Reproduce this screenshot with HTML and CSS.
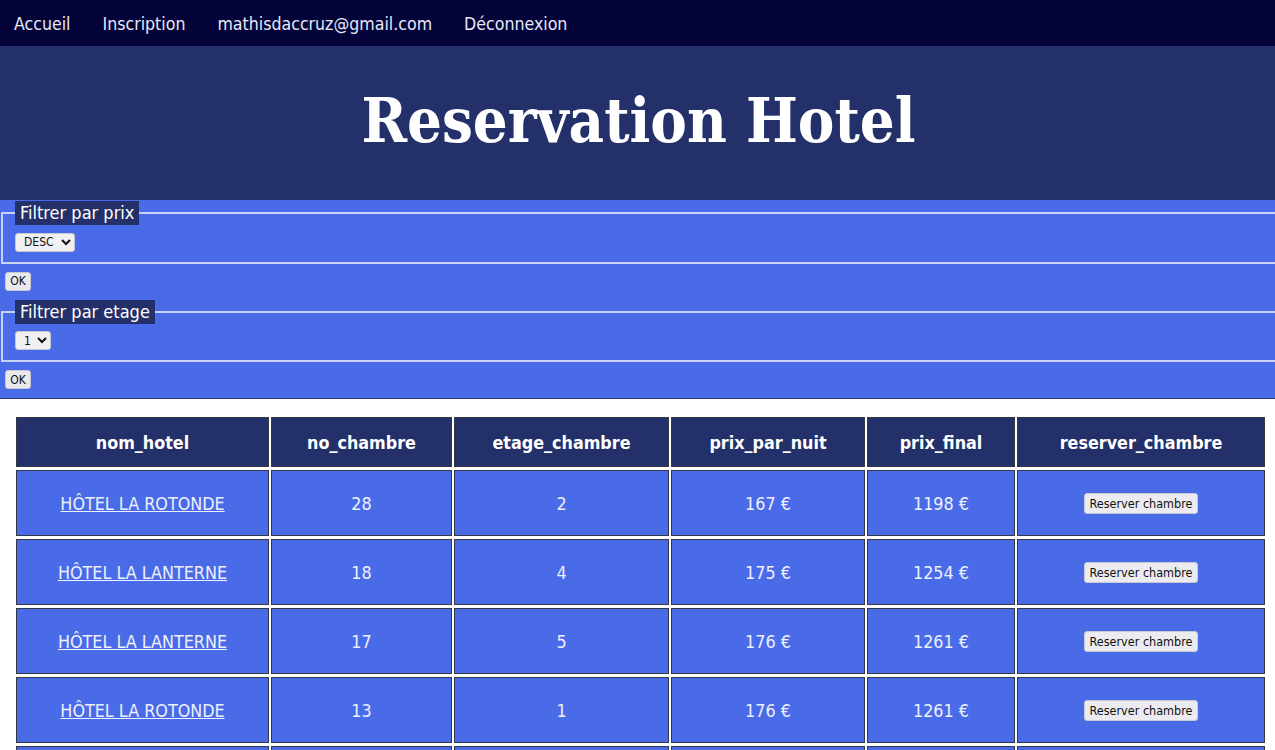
FILE: index.html
```html
<!DOCTYPE html>
<html lang="fr">
<head>
<meta charset="utf-8">
<title>Reservation Hotel</title>
<link rel="stylesheet" href="styles.css">
</head>
<body>
<nav class="topnav">
  <a href="#">Accueil</a>
  <a href="#">Inscription</a>
  <a href="#">mathisdaccruz@gmail.com</a>
  <a href="#">Déconnexion</a>
</nav>
<header class="banner">
  <h1>Reservation Hotel</h1>
</header>
<section class="filters">
  <form class="filter-form">
    <fieldset class="fs">
      <legend class="lg">Filtrer par prix</legend>
      <select class="sel sel-desc"><option>DESC</option><option>ASC</option></select>
    </fieldset>
    <button type="button" class="btn-ok">OK</button>
  </form>
  <form class="filter-form">
    <fieldset class="fs">
      <legend class="lg">Filtrer par etage</legend>
      <select class="sel sel-num"><option>1</option><option>2</option></select>
    </fieldset>
    <button type="button" class="btn-ok">OK</button>
  </form>
</section>
<main class="content">
  <table class="rooms">
    <colgroup>
      <col style="width:253px"><col style="width:181px"><col style="width:215px"><col style="width:194px"><col style="width:148px"><col>
    </colgroup>
    <thead>
      <tr><th>nom_hotel</th><th>no_chambre</th><th>etage_chambre</th><th>prix_par_nuit</th><th>prix_final</th><th>reserver_chambre</th></tr>
    </thead>
    <tbody>
      <tr><td><a href="#">HÔTEL LA ROTONDE</a></td><td>28</td><td>2</td><td>167 €</td><td>1198 €</td><td><button type="button" class="btn-res">Reserver chambre</button></td></tr>
      <tr><td><a href="#">HÔTEL LA LANTERNE</a></td><td>18</td><td>4</td><td>175 €</td><td>1254 €</td><td><button type="button" class="btn-res">Reserver chambre</button></td></tr>
      <tr><td><a href="#">HÔTEL LA LANTERNE</a></td><td>17</td><td>5</td><td>176 €</td><td>1261 €</td><td><button type="button" class="btn-res">Reserver chambre</button></td></tr>
      <tr><td><a href="#">HÔTEL LA ROTONDE</a></td><td>13</td><td>1</td><td>176 €</td><td>1261 €</td><td><button type="button" class="btn-res">Reserver chambre</button></td></tr>
      <tr><td></td><td></td><td></td><td></td><td></td><td></td></tr>
    </tbody>
  </table>
</main>
</body>
</html>
```

FILE: styles.css
```css
* { box-sizing: border-box; }
html, body { margin: 0; padding: 0; }
body {
  font-family: "DejaVu Sans", Verdana, sans-serif;
  font-stretch: condensed;
  background: #ffffff;
  color: #fff;
}
.topnav {
  height: 46px;
  background: #03033a;
  display: flex;
  align-items: center;
  padding: 2px 0 0 14px;
}
.topnav a {
  color: #e6e8f5;
  text-decoration: none;
  font-size: 17.6px;
  margin-right: 32px;
}
.banner {
  height: 154px;
  background: #233069;
  display: flex;
  align-items: center;
  justify-content: center;
}
.banner h1 {
  margin: 0 0 6px 2px;
  font-family: "DejaVu Serif", Georgia, serif;
  font-stretch: condensed;
  font-weight: bold;
  font-size: 61px;
  color: #fff;
}
.filters {
  background: #4a6be8;
  height: 199px;
  border-bottom: 1px solid #2a3c7a;
  padding-top: 1px;
}
.filter-form {
  display: flex;
  flex-direction: column;
  align-items: flex-start;
}
.fs {
  align-self: stretch;
  margin: 0 0 0 1px;
  border: 2px solid #c9d2f5;
  border-right: none;
  padding: 6px 12px 10px 12px;
}
.lg {
  background: #233069;
  color: #fff;
  font-size: 18px;
  padding: 2px 5px 3px;
  line-height: 19px;
}
.sel {
  font-family: "DejaVu Sans", sans-serif;
  font-stretch: condensed;
  font-size: 12px;
  height: 19px;
  border: 1px solid #c8c8d0;
  border-radius: 3px;
  background: #f0f0f2;
  color: #111;
  padding: 0 2px 0 4px;
}
.sel-desc { width: 60px; margin-top: 1px; }
.sel-num { width: 36px; }
.btn-ok {
  margin: 8px 0 9px 5px;
  font-family: "DejaVu Sans", sans-serif;
  font-stretch: condensed;
  font-size: 12px;
  height: 19px;
  width: 26px;
  padding: 0;
  border: 1px solid #c8c8d0;
  border-radius: 3px;
  background: #e9e9ed;
  color: #111;
}
.content {
  padding: 15px 10px 0 14px;
}
.rooms {
  width: 1253px;
  border-collapse: separate;
  border-spacing: 2px 3px;
  table-layout: fixed;
}
.rooms th, .rooms td {
  border: 1px solid #333844;
  text-align: center;
  font-size: 17.8px;
}
.rooms th {
  background: #233069;
  color: #fff;
  font-weight: bold;
  height: 50px;
}
.rooms td {
  background: #4a6be8;
  color: #eef0fb;
  height: 66px;
}
.rooms td a {
  color: #eef0fb;
  text-decoration: underline;
}
.btn-res {
  font-family: "DejaVu Sans", sans-serif;
  font-stretch: condensed;
  font-size: 12.5px;
  height: 21px;
  padding: 0 5px;
  margin-bottom: 2px;
  border: 1px solid #c8c8d0;
  border-radius: 3px;
  background: #ececf0;
  color: #111;
}
```
